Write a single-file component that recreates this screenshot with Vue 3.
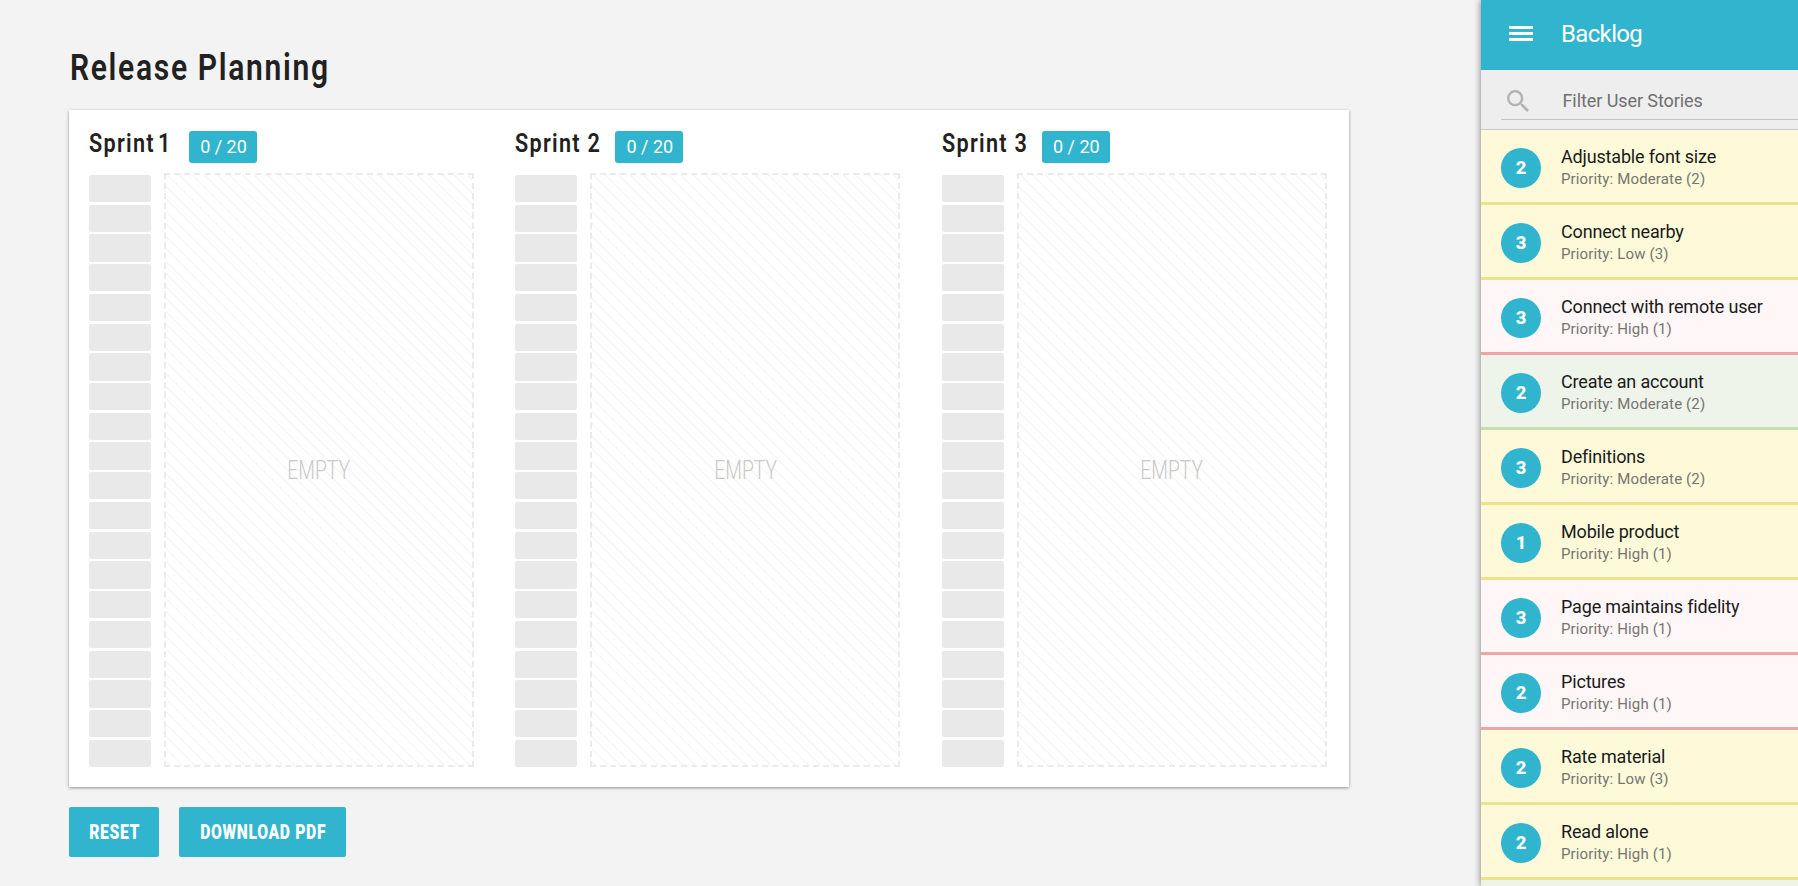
<script setup>
const sprints = [
  { name: 'Sprint', num: 1 },
  { name: 'Sprint', num: 2 },
  { name: 'Sprint', num: 3 },
]
const stories = [
  { points: 2, title: 'Adjustable font size', priority: 'Moderate (2)', tone: 'yellow' },
  { points: 3, title: 'Connect nearby', priority: 'Low (3)', tone: 'yellow' },
  { points: 3, title: 'Connect with remote user', priority: 'High (1)', tone: 'red' },
  { points: 2, title: 'Create an account', priority: 'Moderate (2)', tone: 'green' },
  { points: 3, title: 'Definitions', priority: 'Moderate (2)', tone: 'yellow' },
  { points: 1, title: 'Mobile product', priority: 'High (1)', tone: 'yellow' },
  { points: 3, title: 'Page maintains fidelity', priority: 'High (1)', tone: 'red' },
  { points: 2, title: 'Pictures', priority: 'High (1)', tone: 'red' },
  { points: 2, title: 'Rate material', priority: 'Low (3)', tone: 'yellow' },
  { points: 2, title: 'Read alone', priority: 'High (1)', tone: 'yellow' },
]
</script>

<template>
  <div class="page">
    <main class="main">
      <h1 class="title"><span class="narrow">Release Planning</span></h1>
      <section class="board">
        <div v-for="s in sprints" :key="s.num" class="sprint">
          <header class="sprint-head">
            <h2 class="sprint-name"><span class="narrow">{{ s.name }} <span :class="{ slim: s.num === 1 }">{{ s.num }}</span></span></h2>
            <span class="badge">0 / 20</span>
          </header>
          <div class="sprint-body">
            <div class="slots"><div v-for="n in 20" :key="n" class="slot"></div></div>
            <div class="dropzone"><span class="empty">EMPTY</span></div>
          </div>
        </div>
      </section>
      <div class="actions">
        <button class="btn reset"><span class="label">RESET</span></button>
        <button class="btn download"><span class="label">DOWNLOAD PDF</span></button>
      </div>
    </main>
    <aside class="backlog">
      <header class="bar">
        <svg class="menu" viewBox="0 0 24 15"><path d="M0 0h24v3H0zM0 6h24v3H0zM0 12h24v3H0z" fill="#fff" /></svg>
        <span>Backlog</span>
      </header>
      <div class="filter">
        <div class="field">
          <svg class="search" viewBox="3 3 17.5 17.5"><path fill="#b3b3b3" d="M15.5 14h-.79l-.28-.27A6.471 6.471 0 0 0 16 9.500 6.500 6.500 0 1 0 9.500 16c1.610 0 3.090-.590 4.230-1.570l.27.280v.790l5 4.990L20.490 19l-4.990-5zm-6 0C7.010 14 5 11.990 5 9.500S7.010 5 9.500 5 14 7.010 14 9.500 11.990 14 9.500 14z" /></svg>
          <span>Filter User Stories</span>
        </div>
      </div>
      <div v-for="st in stories" :key="st.title" class="story" :class="st.tone">
        <div class="points">{{ st.points }}</div>
        <div class="info">
          <div class="name">{{ st.title }}</div>
          <div class="priority">Priority: {{ st.priority }}</div>
        </div>
      </div>
      <div class="story green"></div>
    </aside>
  </div>
</template>

<style>
body { margin: 0; overflow: hidden; }
</style>

<style scoped>
.page { display: flex; width: 1798px; height: 886px; overflow: hidden; background: #f3f3f3; font-family: Roboto, "Liberation Sans", sans-serif; color: #212121; }
.page * { box-sizing: border-box; }
.main { width: 1280px; margin-left: 69px; flex: none; }
.narrow, .label, .empty { display: inline-block; white-space: nowrap; transform-origin: 0 50%; }
.title { margin: 0; height: 110px; padding-top: 47px; font-size: 36px; line-height: 43px; font-weight: 600; letter-spacing: 2px; }
.title .narrow { transform: scaleX(.835); margin-left: 1px; }
.board { display: flex; height: 677px; background: #fff; box-shadow: 0 1px 3px rgba(0,0,0,.4); }
.sprint { width: 426.4px; flex: none; padding: 21px 0 0 20px; }
.sprint-head { display: flex; height: 42px; }
.sprint-name { margin: -2px 0 0; width: 100px; font-size: 25px; line-height: 30px; font-weight: 600; letter-spacing: 1.5px; white-space: nowrap; }
.sprint-name .narrow { transform: scaleX(.865); }
.slim { margin-left: -4px; }
.badge { width: 68px; height: 32px; border-radius: 3px; background: #31b4cd; color: #fff; font-size: 18px; line-height: 32px; text-align: center; padding-left: 1px; }
.sprint-body { display: flex; height: 594px; }
.slots { width: 62px; padding-top: 2px; margin-right: 13px; display: flex; flex-direction: column; justify-content: space-between; }
.slot { height: 27.3px; border-radius: 2px; background: #e9e9e9; }
.dropzone { width: 310px; border: 2px dashed #ebebeb; display: flex; align-items: center; justify-content: center; background: repeating-linear-gradient(45deg, #fff 0 1.7px, #f6f6f6 2px 3.1px, #fff 3.4px 8.84px); }
.empty { font-size: 25px; font-weight: 300; color: #c8c8c8; transform: scaleX(.77); transform-origin: 50% 50%; }
.actions { display: flex; gap: 20px; margin-top: 20px; }
.btn { border: 0; padding: 0; height: 50px; border-radius: 2px; background: #31b4cd; color: #fff; font: 900 19.5px/52px Roboto, sans-serif; display: flex; justify-content: center; letter-spacing: .8px; }
.reset { width: 90px; }
.download { width: 167px; }
.label { transform: scaleX(.806); transform-origin: 50% 50%; margin-left: 1px; }
.backlog { width: 317px; margin-left: 132px; flex: none; box-shadow: 0 0 7px rgba(0,0,0,.5); background: #eee; }
.bar { display: flex; align-items: center; height: 70px; background: #31b4cd; color: #fff; font-size: 24px; letter-spacing: -.65px; padding: 0 0 3px 28px; }
.menu { width: 24px; height: 15px; margin-right: 28px; }
.filter { height: 60px; padding: 0 0 9px 20px; border-bottom: 1px solid #c9c9c9; }
.field { height: 50px; border-bottom: 1px solid #c2c2ca; display: flex; align-items: center; padding: 12px 0 0 6px; font-size: 18px; letter-spacing: -.08px; color: #707070; }
.search { width: 22px; height: 22px; margin-right: 33.5px; }
.story { height: 75px; border-bottom: 3px solid; display: flex; padding: 18px 0 0 20px; }
.yellow { background: #fefad9; border-color: #ebe48b; }
.red { background: #fff6f7; border-color: #efa5a6; }
.green { background: #eef4ea; border-color: #c5e1a9; }
.points { width: 40px; height: 40px; border-radius: 50%; background: #31b4cd; color: #fff; font-size: 18.5px; line-height: 40px; font-weight: 800; text-align: center; margin-right: 20px; }
.info { white-space: nowrap; margin-top: -3px; }
.name { font-size: 18px; line-height: 24px; letter-spacing: -.17px; color: #1a1a1a; }
.priority { font-size: 15px; line-height: 20px; letter-spacing: .14px; color: #757570; }
</style>
